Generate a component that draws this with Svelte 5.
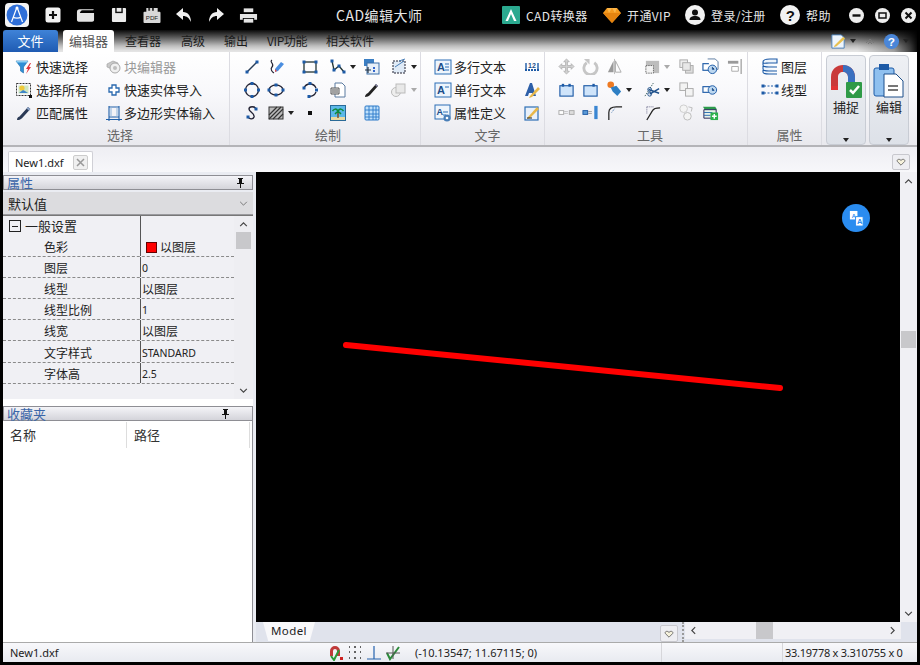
<script>
  const n = (x, y, c = '#1d5aa6', s = 3) => `<rect x="${x - s / 2}" y="${y - s / 2}" width="${s}" height="${s}" fill="${c}"/>`;
  const icons = {
    filter: `<path d="M1 3h12l-4.500 6v6l-3-2V9z" fill="#2f8fd6" stroke="#1c6aa8" stroke-width=".6"/><path d="M1 3h12l-1 1.600H2z" fill="#8fd0f2"/><path d="M15 5l-4 6h2l-2 5 5-7h-2l2-4z" fill="#e2333a"/>`,
    selectall: `<rect x="1.500" y="2.500" width="14" height="12" fill="none" stroke="#333" stroke-dasharray="2 1"/><rect x="3.500" y="4.500" width="10" height="8" fill="#cfe6c0"/><circle cx="7" cy="7" r="2.600" fill="#f0c93a"/><path d="M4 12l4-3 2 1 3 2z" fill="#3f86c8"/><rect x="14" y="14" width="3" height="3" fill="#111"/>`,
    match: `<path d="M2 16c0-2 .8-3 2.500-3.600L13 3l2.400 2L7 14.200C5.600 15.600 4 16 2 16z" fill="#2b3a56"/><path d="M11.500 4.600L13 3l2.400 2-1.400 1.700z" fill="#8aa2c6"/>`,
    blockedit: `<path d="M2 6l6-3 5 2v3l-6 3-5-2z" fill="#c9c9c9" stroke="#a5a5a5" stroke-width=".7"/><circle cx="10" cy="10" r="5" fill="#f0f0f0" stroke="#a8a8a8"/><circle cx="10" cy="10" r="2" fill="#bdbdbd"/>`,
    addcross: `<path d="M7 4h4v3h3v4h-3v3H7v-3H4V7h3z" fill="#fff" stroke="#2868ae" stroke-width="1.300"/>`,
    polygon: `<path d="M1 15.500h16M4 2v15M14 2v15M4 3h10M4 13h10" stroke="#1f5fa8" fill="none" stroke-width="1.100"/><path d="M6 3v10M12 3v10" stroke="#8fb4da"/>`,
    line: `<path d="M4 14L14 4" stroke="#2a3e58" stroke-width="1.400"/>${n(4, 14)}${n(14, 4)}`,
    pen: `<path d="M5 2C2 4 8 6 5 9c-2 2 0 5 2 6" fill="none" stroke="#223" stroke-width="1.200"/><path d="M8 11l6-7 3 2-6 7-3 1z" fill="#4b8ee0"/><path d="M8 11l2 2-2 1z" fill="#e05050"/>`,
    rect: `<rect x="3" y="4" width="12" height="10" fill="none" stroke="#233" stroke-width="1.300"/>${n(3, 4)}${n(15, 4)}${n(3, 14)}${n(15, 14)}`,
    polyline: `<path d="M3 3l2 9 5-4 5 6" fill="none" stroke="#233" stroke-width="1.300"/>${n(3, 3)}${n(5, 12)}${n(10, 8)}${n(15, 14)}`,
    copyblock: `<rect x="1" y="1" width="10" height="7" fill="#3b7fc4"/><rect x="4" y="5" width="12" height="11" fill="#e8f0f8" stroke="#3b6ea8"/><path d="M2 12h6M5 9v6" stroke="#234" stroke-width="1.200"/><rect x="10" y="9" width="2" height="2" fill="#36c"/><rect x="10" y="12" width="2" height="2" fill="#36c"/>`,
    dotrect: `<rect x="3" y="3" width="12" height="12" fill="#dfeaf6" stroke="#223" stroke-dasharray="2 1"/><path d="M9 3l6-2M5 9l9-6" stroke="#4a7fb8"/>`,
    circle: `<circle cx="9" cy="9" r="6.500" fill="none" stroke="#223" stroke-width="1.300"/>${n(9, 2.500)}${n(9, 15.500)}${n(2.500, 9)}${n(15.500, 9)}`,
    ellipse: `<ellipse cx="9" cy="9" rx="7" ry="5" fill="none" stroke="#223" stroke-width="1.300"/>${n(9, 4)}${n(9, 14)}${n(2, 9)}${n(16, 9)}`,
    arc: `<path d="M3 7a6.500 6.500 0 0 1 12 0M15 11a6.500 6.500 0 0 1-8 4" fill="none" stroke="#223" stroke-width="1.300"/>${n(9, 2.500)}${n(15.500, 9)}${n(8, 15.500)}${n(3, 7)}`,
    doc: `<path d="M6 2h7l3 3v11H6z" fill="#fff" stroke="#5a7aa0"/><path d="M2 7h8v6H2z" fill="#eee" stroke="#555"/><path d="M3 9h6M3 11h6" stroke="#555"/>`,
    brush: `<path d="M2 16c0-2 1-3 3-4l8-9 2 2-8 9c-1 1-3 2-5 2z" fill="#222"/><path d="M12 4l1-1 2 2-1 1z" fill="#88a"/>`,
    graycopy: `<circle cx="6" cy="11" r="4.500" fill="#eee" stroke="#bbb"/><rect x="6" y="3" width="9" height="9" fill="#e8e8e8" stroke="#bbb"/>`,
    spline: `<path d="M13 5c-1-3-7-3-7 0s6 4 5 8c-1 3-5 2-6 0" fill="none" stroke="#223" stroke-width="1.400"/>${n(13, 5)}${n(5, 13)}`,
    hatch: `<rect x="2" y="3" width="14" height="12" fill="#bbb" stroke="#333"/><path d="M2 11l8-8M2 15L14 3M6 15l10-10M11 15l5-5" stroke="#333" stroke-width="1.200"/>`,
    point: `<rect x="7" y="7" width="4" height="4" fill="#111"/>`,
    image: `<rect x="1.500" y="1.500" width="15" height="15" fill="#5cb8e8" stroke="#2a6a98"/><rect x="2" y="13" width="14" height="3" fill="#e9d9a0"/><path d="M9 14V7" stroke="#7a4a20" stroke-width="1.400"/><path d="M9 7C7 4 5 5 3.500 7M9 7c2-3 4-2 5.500 0M9 7L6 10M9 7l3 3" stroke="#0e8a3a" stroke-width="1.500" fill="none"/>`,
    table: `<rect x="2" y="2" width="14" height="14" rx="1" fill="#bfe0fb" stroke="#2a78c8"/><path d="M2 6h14M2 10h14M2 13h14M6 2v14M10 2v14M13 2v14" stroke="#2a78c8" stroke-width=".9"/>`,
    mtext: `<rect x="1" y="2" width="16" height="14" fill="#eef5fc" stroke="#2d6fb5"/><text x="3" y="13" font-size="11" font-weight="700" fill="#1d4f8a" font-family="Liberation Sans">A</text><path d="M11 6h4M11 9h4M11 12h4" stroke="#2d6fb5"/>`,
    stext: `<rect x="1" y="2" width="16" height="14" fill="#eef5fc" stroke="#2d6fb5"/><text x="3" y="13" font-size="11" font-weight="700" fill="#1d4f8a" font-family="Liberation Sans">A</text><path d="M11 6h4" stroke="#2d6fb5"/>`,
    attdef: `<rect x="1" y="1" width="15" height="14" fill="#eef5fc" stroke="#2d6fb5"/><text x="2.500" y="11" font-size="9" font-weight="700" fill="#1d4f8a" font-family="Liberation Sans">A</text><path d="M9 8h5M9 11h3" stroke="#2d6fb5"/><circle cx="13" cy="14" r="3.500" fill="#4a7fb8"/><circle cx="13" cy="14" r="1.300" fill="#fff"/>`,
    dim: `<path d="M2 12h14" stroke="#1d5aa6" stroke-width="2" stroke-dasharray="2 1"/><path d="M3 5v8M15 5v8" stroke="#1d5aa6" stroke-width="1.400"/><text x="5" y="10" font-size="7" font-weight="700" fill="#1d4f8a" font-family="Liberation Sans">12</text>`,
    astyle: `<path d="M2 15L7 2h2l4 13h-3l-1-3H6l-1 3z" fill="#2d5fa8"/><path d="M7 15l8-9 2 2-8 8-3 1z" fill="#e8b84a"/>`,
    tedit: `<rect x="2" y="3" width="13" height="13" fill="#e9f1fa" stroke="#2d6fb5" stroke-width="1.200"/><path d="M5 13l9-10 2 2-9 9-3 1z" fill="#e8b84a"/><path d="M4 14h5" stroke="#222"/>`,
    move: `<path d="M9 1l3 3h-2v4h4V6l3 3-3 3v-2h-4v4h2l-3 3-3-3h2v-4H4v2L1 9l3-3v2h4V4H6z" fill="#d2d2d2" stroke="#a6a6a6" stroke-width=".7"/>`,
    rotate: `<path d="M5 5a7 7 0 1 0 8 0" fill="none" stroke="#c6c6c6" stroke-width="3"/><path d="M2 1h6v6z" fill="#c6c6c6"/>`,
    mirror: `<path d="M8 3v12H2z" fill="#9a9a9a"/><path d="M10 3v12h6z" fill="none" stroke="#aaa"/><path d="M9 1v16" stroke="#bbb"/>`,
    scale: `<rect x="2" y="3" width="14" height="13" fill="#bdbdbd"/><rect x="2" y="8" width="8" height="8" fill="#f3f3f3" stroke="#666" stroke-dasharray="1.500 1"/>`,
    stackg: `<rect x="2" y="2" width="8" height="8" fill="#eee" stroke="#aaa"/><rect x="8" y="8" width="8" height="8" fill="#ddd" stroke="#aaa"/><rect x="5" y="5" width="8" height="8" fill="#e8e8e8" stroke="#aaa"/>`,
    clockdoc: `<rect x="1" y="6" width="9" height="7" fill="#fff" stroke="#1d5aa6" stroke-width="1.200"/><path d="M6 1h8l3 3v8H9" fill="#fff" stroke="#5a7aa0"/><circle cx="11" cy="12" r="4.500" fill="#bcd7f0" stroke="#1d5aa6"/><path d="M11 9.500V12h2" stroke="#1d5aa6"/>`,
    alignr: `<path d="M1 3h11v3H1z" fill="#9a9a9a"/><path d="M5 9h7v5H5z" fill="#fff" stroke="#aaa"/><path d="M15 1v16" stroke="#aaa" stroke-width="1.500"/>`,
    box1: `<rect x="2" y="5" width="14" height="11" fill="#cfe4fa" stroke="#1d5aa6" stroke-width="1.200"/><rect x="4" y="3" width="2.500" height="3" fill="#1d5aa6"/><rect x="11" y="3" width="2.500" height="3" fill="#1d5aa6"/>`,
    box2: `<rect x="2" y="5" width="14" height="11" fill="#cfe4fa" stroke="#1d5aa6" stroke-width="1.200"/><rect x="11" y="3" width="2.500" height="3" fill="#1d5aa6"/>`,
    tag: `<circle cx="5" cy="4" r="3.500" fill="#ee7a22"/><path d="M5 7l6-2 5 6-4 5-5-5z" fill="#2e7fc4"/>`,
    scissor: `<path d="M1 16L10 2" stroke="#466" stroke-dasharray="1.500 1"/><path d="M5 9l11 4M6 14l10-6" stroke="#1d4f8a" stroke-width="1.500"/><circle cx="6" cy="9" r="2" fill="none" stroke="#1d4f8a"/><circle cx="6" cy="14" r="2" fill="none" stroke="#1d4f8a"/>`,
    stack2: `<rect x="2" y="2" width="8" height="8" fill="#f3f3f3" stroke="#aaa"/><rect x="8" y="8" width="8" height="8" fill="#f3f3f3" stroke="#aaa"/>`,
    clock2: `<rect x="1" y="6" width="9" height="6" fill="#fff" stroke="#1d5aa6" stroke-width="1.200"/><circle cx="11" cy="9.500" r="4.500" fill="#bcd7f0" stroke="#1d5aa6"/><path d="M11 7.500V10h2" stroke="#1d5aa6"/>`,
    dots1: `<rect x="1" y="7" width="5" height="4" fill="#fff" stroke="#aaa"/><rect x="12" y="7" width="5" height="4" fill="#ddd" stroke="#aaa"/><path d="M7 8h4M7 10h4" stroke="#999" stroke-dasharray="1 1"/>`,
    dots2: `<rect x="1" y="7" width="5" height="4" fill="#5b9ad6" stroke="#1d5aa6"/><path d="M7 8h4M7 10h4" stroke="#555" stroke-dasharray="1 1"/><rect x="13" y="2" width="3.500" height="14" fill="#3a86d2"/>`,
    fillet1: `<path d="M3 17V9c0-4 3-6 8-6h6" fill="none" stroke="#222" stroke-width="1.300"/><path d="M6 9l3-4" stroke="#3a6ea8" stroke-dasharray="1 1"/>`,
    fillet2: `<path d="M3 17L9 7c1-2 4-3 8-3" fill="none" stroke="#222" stroke-width="1.300"/><path d="M3 3v8M3 3h8" stroke="#668" stroke-dasharray="1 1"/>`,
    circles: `<circle cx="6" cy="5" r="4" fill="#f4f4f4" stroke="#ccc"/><circle cx="10" cy="13" r="4" fill="#f4f4f4" stroke="#bbb"/><path d="M11 3l4 1-1 4" fill="none" stroke="#bbb"/>`,
    layeradd: `<path d="M1 3h13l2 3H3z" fill="#2c9a4c"/><path d="M2 6h13v9H2z" fill="#e8f2ea" stroke="#225"/><path d="M2 9h9M2 12h7" stroke="#2b6db0"/><rect x="9" y="9" width="8" height="8" fill="#2cb04c"/><path d="M13 10.500v5M10.500 13h5" stroke="#fff" stroke-width="1.500"/>`,
    layers: `<path d="M2 4c0-2 3-3 7-3h7v4H8C5 5 2 6 2 4z M2 4v3c0 2 3 2 6 2h8M2 8v3c0 2 3 2 6 2h8M2 12v2c0 2 3 2 6 2h8" fill="#eef5fc" stroke="#1d5aa6" stroke-width="1.100"/>`,
    linetype: `<path d="M3 5h12M3 12h12" stroke="#1d5aa6" stroke-dasharray="2 1.500"/>${n(2, 5, '#1d5aa6', 3)}${n(16, 5, '#1d5aa6', 3)}${n(2, 12, '#1d5aa6', 3)}${n(16, 12, '#1d5aa6', 3)}`
  };

  const pickRows = [
    [{ i: 'filter', t: '快速选择' }, { i: 'blockedit', t: '块编辑器', off: true }],
    [{ i: 'selectall', t: '选择所有' }, { i: 'addcross', t: '快速实体导入' }],
    [{ i: 'match', t: '匹配属性' }, { i: 'polygon', t: '多边形实体输入' }]
  ];
  const draw = [
    ['line'], ['pen'], ['rect'], ['polyline', 1], ['copyblock'], ['dotrect', 1],
    ['circle'], ['ellipse'], ['arc'], ['doc'], ['brush'], ['graycopy', 2],
    ['spline'], ['hatch', 1], ['point'], ['image'], ['table'], []
  ];
  const tool = [
    ['move'], ['rotate'], ['mirror'], ['scale', 2], ['stackg'], ['clockdoc'], ['alignr'],
    ['box1'], ['box2'], ['tag', 1], ['scissor', 1], ['stack2'], ['clock2'], [],
    ['dots1'], ['dots2'], ['fillet1'], ['fillet2'], ['circles'], ['layeradd'], []
  ];
  const texts = [
    { i: 'mtext', t: '多行文本', j: 'dim' },
    { i: 'stext', t: '单行文本', j: 'astyle' },
    { i: 'attdef', t: '属性定义', j: 'tedit' }
  ];
  const props = [
    ['色彩', '以图层', true], ['图层', '0'], ['线型', '以图层'], ['线型比例', '1'],
    ['线宽', '以图层'], ['文字样式', 'STANDARD'], ['字体高', '2.5']
  ];
  const tabs = ['查看器', '高级', '输出', 'VIP功能', '相关软件'];
  const isLatin = (s) => /^[\x00-\x7f]+$/.test(s);
</script>

{#snippet ic(name)}
  <svg class="ic" viewBox="0 0 18 18" aria-hidden="true">{@html icons[name]}</svg>
{/snippet}

{#snippet pin()}
  <svg class="pin" viewBox="0 0 9 10" aria-hidden="true"><path d="M2 0h5v1H6v4h2v1H5v4H4V6H1V5h2V1H2z" fill="#111"/></svg>
{/snippet}

{#snippet heart()}
  <svg class="heart" viewBox="0 0 12 10" aria-hidden="true"><path d="M6 9L1.500 4.500C0 2.500 3.500 0 6 3c2.500-3 6-.5 4.500 1.500z" fill="#f6f2dc" stroke="#555"/></svg>
{/snippet}

<div class="app">
  <header class="title">
    <div class="logo">
      <svg viewBox="0 0 24 24" aria-hidden="true"><circle cx="12" cy="12" r="10.500" fill="#2f6fd8"/><path d="M12 4L6.500 19M12 4l5.500 15M8 14c2 1.500 6 1.500 8 0" fill="none" stroke="#fff" stroke-width="1.200"/><circle cx="12" cy="5" r="1.500" fill="#fff"/></svg>
    </div>
    <div class="quick">
      <svg class="q plus" viewBox="0 0 18 18"><rect x="1.500" y="1.500" width="15" height="15" rx="2.500" fill="#f2f2f2"/><path d="M9 5v8M5 9h8" stroke="#111" stroke-width="2.200"/></svg>
      <svg class="q folder" viewBox="0 0 20 16"><path d="M1 5c0-2 1-3 3-3h14c1 0 1 1 0 1H7C5 3 4.500 5 4 6h15v7c0 1.500-1 2-2 2H3c-1.500 0-2-1-2-2z" fill="#e4e4e4"/></svg>
      <svg class="q save" viewBox="0 0 17 17"><path d="M2 1h13a1 1 0 0 1 1 1v13a1 1 0 0 1-1 1H2a1 1 0 0 1-1-1V2a1 1 0 0 1 1-1z" fill="#ececec"/><rect x="4.500" y="1" width="8" height="5.500" fill="#111"/><rect x="6" y="1" width="5" height="4" fill="#ececec"/></svg>
      <svg class="q pdf" viewBox="0 0 18 18"><path d="M3 1h12v4h2a1 1 0 0 1 1 1v10a1 1 0 0 1-1 1H1a1 1 0 0 1-1-1V6a1 1 0 0 1 1-1h2z" fill="#d8d8d8"/><rect x="5" y="1" width="2" height="3" fill="#333"/><rect x="9" y="1" width="2" height="3" fill="#333"/><text x="2.500" y="14" font-size="6.500" fill="#222" font-family="Liberation Sans">PDF</text></svg>
      <svg class="q arrow" viewBox="0 0 18 16"><path d="M8 1L1 7l7 6V9c4 0 6 2 8 6 0-6-3-10-8-10z" fill="#f0f0f0"/></svg>
      <svg class="q arrow" viewBox="0 0 18 16"><path d="M10 1l7 6-7 6V9c-4 0-6 2-8 6 0-6 3-10 8-10z" fill="#f0f0f0"/></svg>
      <svg class="q printer" viewBox="0 0 20 17"><path d="M5 1h10v4H5z" fill="#e4e4e4"/><path d="M1 7h18v6h-3v-2H4v2H1z" fill="#e4e4e4"/><path d="M5 12h10v4H5z" fill="#e4e4e4"/></svg>
    </div>
    <div class="apptitle">CAD编辑大师</div>
    <div class="actions">
      <span class="act conv">
        <svg class="a18" viewBox="0 0 18 18"><rect width="18" height="18" rx="1" fill="#2ba98f"/><path d="M9 3l5.500 12H12L9 8l-3 7H3.500z" fill="#fff"/></svg>CAD转换器
      </span>
      <span class="act vip">
        <svg class="a18" viewBox="0 0 18 16"><path d="M4 1h10l4 5-9 10L0 6z" fill="#f59a1e"/><path d="M0 6h18L9 16z" fill="#e58410"/><path d="M4 1L6 6l3-5 3 5 2-5z" fill="#fbb64a"/></svg>开通VIP
      </span>
      <span class="act user">
        <svg class="a20" viewBox="0 0 20 20"><circle cx="10" cy="10" r="10" fill="#f2f2f2"/><circle cx="10" cy="7.500" r="3" fill="#111"/><path d="M4.500 15c0-3 2.500-4 5.500-4s5.500 1 5.500 4z" fill="#111"/></svg>登录/注册
      </span>
      <span class="act help">
        <svg class="a20" viewBox="0 0 20 20"><circle cx="10" cy="10" r="10" fill="#f2f2f2"/><text x="5.800" y="15.500" font-size="15" font-weight="700" fill="#111" font-family="Liberation Sans">?</text></svg>帮助
      </span>
      <span class="wins">
        <svg class="w" viewBox="0 0 15 15"><circle cx="7.500" cy="7.500" r="7.500" fill="#eee"/><rect x="3.500" y="6.300" width="8" height="2.400" fill="#111"/></svg>
        <svg class="w" viewBox="0 0 15 15"><circle cx="7.500" cy="7.500" r="7.500" fill="#eee"/><rect x="4" y="5" width="7" height="5" fill="none" stroke="#111" stroke-width="1.500"/></svg>
        <svg class="w" viewBox="0 0 15 15"><circle cx="7.500" cy="7.500" r="7.500" fill="#eee"/><path d="M4.500 4.500l6 6M10.500 4.500l-6 6" stroke="#111" stroke-width="2"/></svg>
      </span>
    </div>
  </header>

  <div class="shell">
    <nav class="tabs">
      <div class="filetab">文件</div>
      <div class="tab on">编辑器</div>
      {#each tabs as t}
        <div class="tab">{t}</div>
      {/each}
      <div class="tabright">
        <svg class="t1" viewBox="0 0 18 18"><path d="M2 2h10l3 3v11H2z" fill="#eef5fc" stroke="#4a7fb8"/><path d="M5 13l9-9 2 2-9 8-3 1z" fill="#e8c050"/></svg>
        <i class="caret small"></i>
        <svg class="chev" viewBox="0 0 10 8"><path d="M1 6l4-4 4 4M3 7l2-2 2 2" fill="none" stroke="#777"/></svg>
        <svg class="t2" viewBox="0 0 18 18"><circle cx="9" cy="9" r="8" fill="#4a86d8"/><text x="5" y="14" font-size="12.500" font-weight="700" fill="#fff" font-family="Liberation Sans">?</text></svg>
        <i class="caret small"></i>
      </div>
    </nav>

    <section class="ribbon">
      <div class="group g-pick">
        <div class="cells">
          {#each pickRows as row}
            {#each row as item}
              <div class="cmd" class:off={item.off}>{@render ic(item.i)}<span>{item.t}</span></div>
            {/each}
          {/each}
        </div>
        <div class="glabel">选择</div>
      </div>
      <div class="group g-draw">
        <div class="cells">
          {#each draw as d}
            <div class="tool">
              {#if d[0]}{@render ic(d[0])}{/if}
              {#if d[1]}<i class="caret" class:dim={d[1] === 2}></i>{/if}
            </div>
          {/each}
        </div>
        <div class="glabel">绘制</div>
      </div>
      <div class="group g-text">
        <div class="cells">
          {#each texts as x}
            <div class="cmd">{@render ic(x.i)}<span>{x.t}</span></div>
            <div class="tool">{@render ic(x.j)}</div>
          {/each}
        </div>
        <div class="glabel">文字</div>
      </div>
      <div class="group g-tool">
        <div class="cells">
          {#each tool as d}
            <div class="tool">
              {#if d[0]}{@render ic(d[0])}{/if}
              {#if d[1]}<i class="caret" class:dim={d[1] === 2}></i>{/if}
            </div>
          {/each}
        </div>
        <div class="glabel">工具</div>
      </div>
      <div class="group g-attr">
        <div class="cells">
          <div class="cmd">{@render ic('layers')}<span>图层</span></div>
          <div class="cmd">{@render ic('linetype')}<span>线型</span></div>
        </div>
        <div class="glabel">属性</div>
      </div>
      <div class="bigs">
        <div class="big">
          <svg class="bigic" viewBox="0 0 32 34"><path d="M1 26V13C1 5 7 1 13 1s12 4 12 12v6h-7v-6c0-3-2-5-5-5s-5 2-5 5v13z" fill="#c93a3a"/><path d="M13 1c6 0 12 4 12 12v6h-7v-6c0-3-2-5-5-5z" fill="#3a70c0"/><path d="M1 26h7v-4H1z" fill="#e03535"/><rect x="16" y="18" width="16" height="16" rx="1" fill="#2f9a47"/><path d="M20 26l3 3 6-7" fill="none" stroke="#fff" stroke-width="2.500"/></svg>
          <span>捕捉</span>
          <i class="caret"></i>
        </div>
        <div class="big">
          <svg class="bigic" viewBox="0 0 32 34"><rect x="1" y="4" width="20" height="28" rx="2" fill="#8fc0ef" stroke="#1d5aa6"/><rect x="6" y="0" width="10" height="6" fill="#1d5aa6"/><path d="M11 10h12l7 7v16H11z" fill="#fff" stroke="#1d4f8a"/><path d="M15 22h10M15 26h10" stroke="#777" stroke-width="2"/></svg>
          <span>编辑</span>
          <i class="caret"></i>
        </div>
      </div>
    </section>

    <div class="docbar">
      <div class="doctab">
        <span>New1.dxf</span>
        <span class="closebox"><svg viewBox="0 0 9 9"><path d="M1 1l7 7M8 1L1 8" stroke="#999" stroke-width="1.500"/></svg></span>
      </div>
      <div class="hbtn top">{@render heart()}</div>
    </div>

    <div class="body">
      <aside class="side">
        <div class="phead">属性 {@render pin()}</div>
        <div class="combo"><span>默认值</span><svg viewBox="0 0 10 6"><path d="M1 1l4 4 4-4" fill="none" stroke="#666"/></svg></div>
        <div class="pgrid">
          <div class="ptable">
            <div class="prow head">
              <div class="pname"><span class="minus"></span>一般设置</div>
              <div class="pval"></div>
            </div>
            {#each props as p}
              <div class="prow">
                <div class="pname ind">{p[0]}</div>
                <div class="pval" class:lat={isLatin(p[1])}>{#if p[2]}<i class="swatch"></i>{/if}{p[1]}</div>
              </div>
            {/each}
          </div>
          <div class="vsb">
            <svg class="up" viewBox="0 0 10 6"><path d="M1 5l4-4 4 4" fill="none" stroke="#444" stroke-width="1.400"/></svg>
            <div class="thumb"></div>
            <svg class="down" viewBox="0 0 10 6"><path d="M1 1l4 4 4-4" fill="none" stroke="#444" stroke-width="1.400"/></svg>
          </div>
        </div>
        <div class="spacer"></div>
        <div class="phead fav">收藏夹 {@render pin()}</div>
        <div class="favlist">
          <div class="favhead"><div class="f1">名称</div><div class="f2">路径</div></div>
        </div>
      </aside>

      <main class="work">
        <div class="viewrow">
          <div class="canvas">
            <svg class="drawing" viewBox="0 0 644 450" aria-hidden="true"><path d="M90 173L524 216" stroke="#ff0000" stroke-width="6" stroke-linecap="round"/></svg>
            <div class="trans">
              <svg viewBox="0 0 18 18"><path d="M2 1h8v9H2z" fill="#fff"/><path d="M8 7h8v10H8z" fill="#fff" stroke="#2a8cf0"/><text x="4" y="8" font-size="6" fill="#2a8cf0" font-weight="700" font-family="Liberation Sans">A</text><text x="9.500" y="15" font-size="8" fill="#2a8cf0" font-weight="700" font-family="Liberation Sans">A</text></svg>
            </div>
          </div>
          <div class="rsb">
            <svg class="up" viewBox="0 0 10 6"><path d="M1 5l4-4 4 4" fill="none" stroke="#444" stroke-width="1.400"/></svg>
            <div class="rthumb"></div>
            <svg class="down" viewBox="0 0 10 6"><path d="M1 1l4 4 4-4" fill="none" stroke="#444" stroke-width="1.400"/></svg>
          </div>
        </div>
        <div class="sheetbar">
          <div class="model">Model</div>
          <div class="hbtn">{@render heart()}</div>
          <div class="dots"></div>
          <div class="hsb">
            <svg viewBox="0 0 6 10"><path d="M5 1L1 5l4 4" fill="none" stroke="#444" stroke-width="1.400"/></svg>
            <div class="hthumb"></div>
            <svg viewBox="0 0 6 10"><path d="M1 1l4 4-4 4" fill="none" stroke="#444" stroke-width="1.400"/></svg>
          </div>
        </div>
      </main>
    </div>

    <footer class="status">
      <div class="s-file">New1.dxf</div>
      <div class="s-icons">
        <svg viewBox="0 0 16 17"><path d="M2 12V7a5 5 0 0 1 10 0v5H9V7a2 2 0 0 0-4 0v5z" fill="#c03a3a"/><path d="M3 9l3 4 5-10" transform="translate(0 3)" fill="none" stroke="#2a9a3a" stroke-width="2"/><rect x="12" y="13" width="3" height="3" fill="#c22"/></svg>
        <svg viewBox="0 0 16 17"><path d="M2 3h1M7 3h2M13 3h1M2 8h1M7 8h2M13 8h1M2 14h1M7 14h2M13 14h1" stroke="#333" stroke-width="1.500"/></svg>
        <svg viewBox="0 0 16 17"><path d="M8 2v13M1 15h14" stroke="#2563ae" stroke-width="1.200"/></svg>
        <svg viewBox="0 0 16 17"><path d="M2 9l3 6 9-12" fill="none" stroke="#2b8a3a" stroke-width="2"/><path d="M1 9h14M8 2v13" stroke="#555"/></svg>
      </div>
      <div class="s-coord">(-10.13547; 11.67115; 0)</div>
      <div class="s-mid"></div>
      <div class="s-size">33.19778 x 3.310755 x 0</div>
    </footer>
  </div>
</div>

<style>
  :global(body) { margin: 0; background: #000; }
  .app {
    width: 920px; height: 665px; background: #000; display: flex; flex-direction: column; overflow: hidden;
    font-family: "Noto Sans CJK SC", "Liberation Sans", sans-serif; font-size: 12px; color: #222;
  }
  svg { display: block; flex: none; }

  .title { height: 30px; flex: none; display: flex; align-items: center; color: #e6e6e6; position: relative; }
  .logo { width: 24px; height: 24px; margin: 0 0 0 5px; background: #f4f4f4; border-radius: 4px; }
  .quick { display: flex; align-items: center; margin-left: 15px; }
  .plus { width: 18px; height: 18px; margin-right: 14px; }
  .folder { width: 19px; height: 16px; margin-right: 16px; }
  .save { width: 16px; height: 16px; margin-right: 16px; }
  .pdf { width: 18px; height: 17px; margin-right: 14px; }
  .arrow { width: 18px; height: 16px; margin-right: 14px; }
  .printer { width: 19px; height: 17px; }
  .apptitle { margin-left: 78px; font-size: 14px; letter-spacing: .5px; width: 90px; white-space: nowrap; }
  .actions { display: flex; align-items: center; margin-left: 76px; }
  .act { display: flex; align-items: center; gap: 6px; white-space: nowrap; letter-spacing: .4px; }
  .conv { width: 101px; }
  .vip { width: 82px; }
  .user { width: 95px; }
  .help { width: 69px; }
  .a18 { width: 18px; height: 18px; }
  .a20 { width: 20px; height: 20px; }
  .wins { display: flex; gap: 11px; }
  .w { width: 15px; height: 15px; }

  .shell { flex: 1; min-height: 0; margin: 0 3px 3px; display: flex; flex-direction: column; background: #f2f2f6; }

  .tabs {
    height: 22px; flex: none; display: flex; align-items: flex-end; position: relative;
    background: linear-gradient(to bottom, #0a0a0a 0%, #5e5e5e 35%, #bdbdbd 72%, #e4e4e4 95%);
    border-bottom: 1px solid #111; margin-bottom: -1px;
  }
  .filetab {
    width: 55px; height: 22px; line-height: 22px; text-align: center; color: #fff; font-size: 13px;
    background: linear-gradient(#3f83d8, #1f5bb2); border-radius: 3px 3px 0 0; margin-right: 5px;
  }
  .tab { height: 22px; line-height: 22px; padding: 0 10px; font-size: 12px; color: #1a1a1a; white-space: nowrap; }
  .tab:nth-child(n+3) { padding: 0; }
  .tab:nth-child(3) { margin: 0 20px 0 11px; }
  .tab:nth-child(4) { margin-right: 19px; }
  .tab:nth-child(5) { margin-right: 19px; }
  .tab:nth-child(6) { margin-right: 19px; letter-spacing: -.4px; }
  .tab.on { background: #fff; color: #555; font-size: 13px; border-radius: 3px 3px 0 0; width: 51px; box-sizing: border-box; padding: 0; text-align: center; position: relative; z-index: 1; height: 23px; margin-bottom: -1px; }
  .tabright {
    position: absolute; right: 0; top: 0; bottom: 0; width: 92px; display: flex; align-items: center;
    background: linear-gradient(to right, rgba(0,0,0,0) 35%, rgba(0,0,0,.3) 75%, rgba(0,0,0,.7) 92%, rgba(0,0,0,.95) 100%);
  }
  .t1 { width: 17px; height: 17px; margin-left: 5px; }
  .chev { width: 10px; height: 8px; margin: 0 8px 0 9px; }
  .t2 { width: 17px; height: 17px; }
  .caret { width: 0; height: 0; border: 3px solid transparent; border-top: 4px solid #222; border-bottom: 0; margin-left: 3px; display: block; }
  .caret.dim { border-top-color: #aaa; }

  .ribbon {
    height: 95px; flex: none; display: flex;
    background: linear-gradient(#fff 0%, #f8f8fb 45%, #e9e9ee 100%);
    border-bottom: 2px solid #b4b4b8; box-sizing: border-box; position: relative;
  }
  .group { border-right: 1px solid #dcdce2; box-sizing: border-box; display: flex; flex-direction: column; flex: none; }
  .cells { display: grid; grid-auto-rows: 23px; padding-top: 3px; height: 73px; box-sizing: border-box; align-items: center; }
  .glabel { text-align: center; font-size: 13px; color: #666; line-height: 19px; }
  .cmd { display: flex; align-items: center; gap: 3px; font-size: 13px; white-space: nowrap; }
  .cmd.off { color: #9a9a9a; }
  .tool { display: flex; align-items: center; height: 18px; }
  .ic { width: 18px; height: 18px; }

  .g-pick { width: 227px; }
  .g-pick .cells { grid-template-columns: 90px 1fr; padding-left: 12px; }
  .g-pick .cmd:nth-child(even) { gap: 1px; }
  .g-pick .glabel { padding-left: 8px; }
  .g-draw { width: 191px; }
  .g-draw .cells { grid-template-columns: 24px 34px 28px 34px 27px 1fr; padding-left: 13px; }
  .g-draw .glabel { padding-left: 6px; }
  .g-text { width: 124px; }
  .g-text .cells { grid-template-columns: 89px 1fr; padding-left: 13px; }
  .g-text .cmd { gap: 2px; }
  .g-text .glabel { padding-left: 10px; }
  .g-tool { width: 203px; }
  .g-tool .cells { grid-template-columns: 24px 24px 38px 34px 24px 25px 1fr; padding-left: 13px; }
  .g-tool .tool .ic { width: 17px; height: 17px; }
  .g-tool .glabel { padding-left: 8px; }
  .g-attr { width: 74px; }
  .g-attr .cells { grid-template-columns: 1fr; padding-left: 13px; }
  .g-attr .cmd { gap: 2px; }
  .g-attr .glabel { padding-left: 10px; }
  .bigs { display: flex; gap: 3px; padding: 3px 0 0 4px; }
  .big {
    width: 40px; height: 90px; box-sizing: border-box; border: 1px solid #c8ccd4; border-radius: 4px;
    background: linear-gradient(#eef0f4, #dde1e8); display: flex; flex-direction: column; align-items: center;
    font-size: 13px; position: relative;
  }
  .bigic { width: 32px; height: 34px; margin-top: 8px; }
  .big span { line-height: 18px; }
  .big .caret { margin: 22px 0 0; }

  .docbar {
    height: 25px; flex: none; display: flex; align-items: flex-end; justify-content: space-between;
    background: linear-gradient(#eeeef3, #f7f7fa); box-sizing: border-box;
  }
  .doctab {
    width: 85px; height: 21px; margin-left: 5px; background: #fff; border: 1px solid #d0d0d6; border-bottom: 0;
    border-radius: 2px 2px 0 0; display: flex; align-items: center; box-sizing: border-box; padding-left: 6px; font-size: 11px;
    font-family: "Noto Sans", "Liberation Sans", sans-serif; color: #222;
  }
  .closebox {
    width: 15px; height: 15px; margin-left: 9px; border: 1px solid #ccc; border-radius: 2px; background: #f0f0f0;
    display: flex; align-items: center; justify-content: center; box-sizing: border-box;
  }
  .closebox svg { width: 9px; height: 9px; }
  .hbtn {
    width: 18px; height: 16px; border: 1px solid #c8c8ce; border-radius: 2px; background: #eeeef2; box-sizing: border-box;
    display: flex; align-items: center; justify-content: center;
  }
  .hbtn.top { margin: 0 7px 2px 0; }
  .heart { width: 10px; height: 8px; }

  .body { flex: 1; min-height: 0; display: flex; background: #eaecf2; }
  .side { width: 250px; flex: none; display: flex; flex-direction: column; margin-right: 3px; }
  .phead {
    height: 15px; flex: none; margin-top: 3px; display: flex; justify-content: space-between; align-items: center;
    color: #3a66a8; font-size: 13px; line-height: 13px; padding: 0 7px 0 3px; box-sizing: border-box;
    background: linear-gradient(#f4f4f8, #d4d4da); border: 1px solid #8e8e94;
  }
  .pin { width: 9px; height: 10px; }
  .phead.fav { margin-top: 0; padding-right: 22px; }
  .combo {
    height: 23px; flex: none; margin-top: 2px; display: flex; align-items: center; justify-content: space-between;
    padding: 0 5px; background: #dcdcdf; border-bottom: 1px solid #9a9a9e; font-size: 13px; box-sizing: border-box; color: #222;
  }
  .combo svg { width: 9px; height: 5px; }
  .pgrid { height: 184px; flex: none; display: flex; background: #f0f0f4; border-top: 1px solid #777; box-sizing: border-box; }
  .ptable { width: 231px; flex: none; }
  .prow { display: flex; height: 21.100px; box-sizing: border-box; border-bottom: 1px dashed #8a8a8a; }
  .prow.head { border-bottom: 0; height: 20px; }
  .pname { width: 137px; margin-left: 1px; box-sizing: border-box; border-right: 1px solid #555; font-size: 12px; display: flex; align-items: center; line-height: 20px; padding-top: 2px; }
  .pname.ind { padding-left: 40px; }
  .prow.head .pname { padding: 0 0 0 5px; font-size: 13px; }
  .minus { width: 10px; height: 10px; border: 1px solid #222; margin-right: 4px; position: relative; box-sizing: content-box; }
  .minus::after { content: ""; position: absolute; left: 2px; right: 2px; top: 4.500px; height: 1px; background: #222; }
  .pval { flex: 1; padding: 2px 0 0 1px; font-size: 12px; display: flex; align-items: center; line-height: 20px; color: #222; white-space: nowrap; }
  .pval.lat { font-size: 10.500px; font-family: "Noto Sans", "Liberation Sans", sans-serif; }
  .swatch { width: 11px; height: 11px; background: #f00; border: 1px solid #600; box-sizing: border-box; margin: 0 3px 0 4px; }
  .vsb { flex: 1; background: #eeeef2; position: relative; display: flex; flex-direction: column; align-items: center; }
  .vsb .up { width: 9px; height: 5px; margin: 6px 0 0; }
  .vsb .thumb { width: 15px; height: 17px; background: #c8c8cb; margin-top: 5px; }
  .vsb .down { width: 9px; height: 5px; margin-top: auto; margin-bottom: 6px; }
  .spacer { height: 7px; flex: none; background: #fff; }
  .favlist { flex: 1; background: #fff; border-right: 1px solid #8e8e94; }
  .favhead { display: flex; font-size: 13px; height: 26px; align-items: center; color: #333; margin-top: 1px; }
  .f1 { width: 124px; padding-left: 7px; border-right: 1px solid #ddd; box-sizing: border-box; height: 26px; line-height: 26px; }
  .f2 { flex: 1; padding-left: 7px; line-height: 26px; border-right: 1px solid #ddd; height: 26px; margin-right: 2px; }

  .work { flex: 1; min-width: 0; display: flex; flex-direction: column; }
  .viewrow { flex: 1; min-height: 0; display: flex; }
  .canvas { flex: 1; position: relative; background: #000; overflow: hidden; }
  .drawing { position: absolute; left: 0; top: 0; width: 644px; height: 450px; }
  .trans {
    position: absolute; left: 586px; top: 32px; width: 28px; height: 28px; border-radius: 50%; background: #2a8cf0;
    display: flex; align-items: center; justify-content: center;
  }
  .trans svg { width: 17px; height: 17px; }
  .rsb { width: 17px; flex: none; background: #f0f0f4; display: flex; flex-direction: column; align-items: center; }
  .rsb .up { width: 9px; height: 5px; margin-top: 7px; }
  .rthumb { width: 15px; height: 17px; background: #c8c8cb; margin-top: 147px; }
  .rsb .down { width: 9px; height: 5px; margin-top: auto; margin-bottom: 6px; }
  .sheetbar { height: 20px; flex: none; display: flex; align-items: stretch; background: #e0e3ec; }
  .model {
    width: 52px; margin-left: 7px; text-align: center; background: #f8f8fa; font-family: "Noto Sans", "Liberation Sans", sans-serif; font-size: 11.500px;
    letter-spacing: .4px; line-height: 17px; clip-path: polygon(0 0, 100% 0, 90% 100%, 10% 100%); height: 19px;
  }
  .sheetbar .hbtn { margin: 3px 0 0 345px; height: 17px; }
  .dots { width: 0; margin-left: 4px; border-left: 2px dotted #999; }
  .hsb { flex: none; width: 216px; margin-left: 1px; margin-bottom: 3px; display: flex; align-items: center; padding: 0 6px; box-sizing: border-box; background: #f0f0f4; justify-content: space-between; position: relative; }
  .hsb svg { width: 5px; height: 9px; }
  .hthumb { position: absolute; left: 71px; top: 0; bottom: 0; width: 17px; background: #c8c8cb; }

  .status {
    height: 20px; flex: none; display: flex; align-items: center; font-size: 11px; color: #222;
    font-family: "Noto Sans", "Liberation Sans", sans-serif;
    background: linear-gradient(#f8f8fb, #e8eaf0); border-top: 1px solid #aaa; box-sizing: border-box;
  }
  .s-file { width: 325px; padding-left: 7px; box-sizing: border-box; }
  .s-icons { display: flex; gap: 3px; width: 87px; }
  .s-icons svg { width: 16px; height: 17px; }
  .s-coord { width: 246px; white-space: nowrap; }
  .s-mid { width: 122px; height: 100%; border-left: 1px solid #d6d6da; border-right: 1px solid #d6d6da; box-sizing: border-box; }
  .s-size { flex: 1; padding-left: 2px; white-space: nowrap; letter-spacing: -.25px; }
</style>
